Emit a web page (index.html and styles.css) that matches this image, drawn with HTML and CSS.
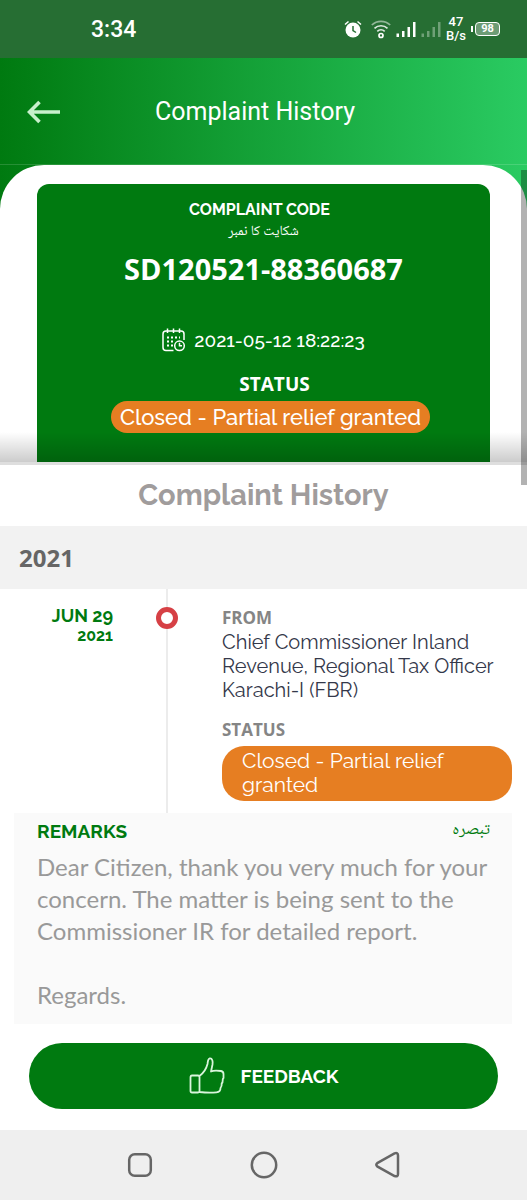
FILE: index.html
```html
<!DOCTYPE html>
<html lang="en">
<head>
<meta charset="utf-8">
<meta name="viewport" content="width=device-width, initial-scale=1">
<title>Complaint History</title>
<link rel="stylesheet" href="styles.css">
</head>
<body>
<div class="screen">
  <div class="status-bar">
    <time class="clock">3:34</time>
    <div class="indicators">
      <svg class="alarm" width="18" height="18" viewBox="0 0 18 18" fill="none" stroke="#fff" stroke-width="2">
        <circle cx="9" cy="10" r="7.500" fill="#fff" stroke="none"/>
        <path d="M1 4.500 4.500 1.500M17 4.500 13.500 1.500" stroke-width="1.500"/>
        <path d="M9 6v4.500l3 2" stroke="#266e33" stroke-width="1.500"/>
      </svg>
      <svg class="wifi" width="20" height="19" viewBox="0 0 20 19" fill="none" stroke="#fff" stroke-width="1.700">
        <path d="M.8 5a13.500 13.500 0 0 1 18.400 0" opacity=".5"/>
        <path d="M3.500 8.300a9.500 9.500 0 0 1 13 0M6.300 11.300a5.500 5.500 0 0 1 7.400 0" opacity=".85"/>
        <circle cx="10" cy="15.500" r="2"/>
      </svg>
      <svg width="20" height="17" viewBox="0 0 20 17" fill="#fff">
        <path d="M.5 12.500h2.500V16H.5zM6 10h2.500v6H6zM11.500 6H14v10h-2.500zM17 1h2.500v15H17z"/>
      </svg>
      <svg width="20" height="17" viewBox="0 0 20 17" fill="#6fa077">
        <path d="M.5 12.500h2.500V16H.5zM6 10h2.500v6H6zM11.500 6H14v10h-2.500zM17 1h2.500v15H17z"/>
      </svg>
      <div class="speed"><span>47</span><span>B/s</span></div>
      <div class="battery"><span class="battery-tip"></span><span class="battery-level">98</span></div>
    </div>
  </div>

  <header class="app-bar">
    <button class="back" type="button" aria-label="Back">
      <svg width="34" height="24" viewBox="0 0 34 24" fill="none" stroke="#c8f0cc" stroke-width="3.600">
        <path d="M33 12H3M12.500 2 2.500 12l10 10"/>
      </svg>
    </button>
    <h1 class="app-title">Complaint History</h1>
  </header>

  <main class="sheet">
    <section class="summary">
      <div class="card">
        <h2 class="card-label">COMPLAINT CODE</h2>
        <p class="card-urdu" lang="ur" dir="rtl">شکایت کا نمبر</p>
        <p class="code">SD120521-88360687</p>
        <p class="stamp">
          <svg width="24" height="24" viewBox="0 0 24 24" fill="none" stroke="#fff" stroke-width="1.500">
            <path d="M11.500 22.500H4a3 3 0 0 1-3-3V6a3 3 0 0 1 3-3h15a3 3 0 0 1 3 3v6M5.500.5v4.500M11.500.5v4.500M17.500.5v4.500"/>
            <path d="M5 9.500h13M5 13.500h8M5 17.500h6" stroke-width="2" stroke-dasharray="2 2"/>
            <circle cx="17.500" cy="17.800" r="4.800"/>
            <path d="M17.500 14.800v3h2.500"/>
          </svg>
          <time>2021-05-12 18:22:23</time>
        </p>
        <h2 class="card-status">STATUS</h2>
        <p class="pill">Closed - Partial relief granted</p>
      </div>
    </section>

    <h2 class="history-title">Complaint History</h2>
    <h3 class="year">2021</h3>

    <article class="entry">
      <div class="entry-date"><span class="day">JUN 29</span><span class="entry-year">2021</span></div>
      <div class="rail"><span class="dot"></span></div>
      <div class="entry-body">
        <h4 class="label">FROM</h4>
        <p class="sender">Chief Commissioner Inland<br>Revenue, Regional Tax Officer<br>Karachi-I (FBR)</p>
        <h4 class="label">STATUS</h4>
        <p class="badge">Closed - Partial relief<br>granted</p>
      </div>
    </article>

    <section class="remarks">
      <div class="remarks-head">
        <h4>REMARKS</h4>
        <span class="remarks-urdu" lang="ur" dir="rtl">تبصرہ</span>
      </div>
      <p class="remarks-text">Dear Citizen, thank you very much for your<br>concern. The matter is being sent to the<br>Commissioner IR for detailed report.<br><br>Regards.</p>
    </section>

    <button class="feedback" type="button">
      <svg width="36" height="38" viewBox="0 0 36 38" fill="none" stroke="#d9f5dc" stroke-width="1.800" stroke-linejoin="round" stroke-linecap="round">
        <path d="M3 18.500h6q1.500 0 1.500 1.500v14q0 1.500-1.500 1.500H3Q1.500 35.500 1.500 34V20.500Q1.500 18.500 3 18.500zM10.500 19c4-3 7-8 8-12 .4-2 .2-5 2-5.500 3-.5 3.500 3 3 6l-1.500 7c3-1.500 7-1 10-.5q2.500.6 2.500 3v4q-1 1-.8 2.500.1 2-1 3 .2 3-1.200 4.500 0 4-4 4.300-8 .6-17-.3"/>
      </svg>
      <span>FEEDBACK</span>
    </button>
    <div class="scroll-thumb"></div>
  </main>

  <nav class="nav-bar" aria-label="System navigation">
    <button type="button" aria-label="Recent apps"><svg width="28" height="28" viewBox="0 0 28 28"><rect x="3.200" y="3.200" width="21.600" height="21.600" rx="5.500"/></svg></button>
    <button type="button" aria-label="Home"><svg width="28" height="28" viewBox="0 0 28 28"><circle cx="14" cy="14" r="12.200"/></svg></button>
    <button type="button" aria-label="Back"><svg width="28" height="28" viewBox="0 0 28 28"><path d="M3.200 12.200 20.500 2.400Q24 1.200 24 4.500v18.500q0 3.200-3.500 2L3.200 15.400q-1.800-1.600 0-3.200z"/></svg></button>
  </nav>
</div>
</body>
</html>
```
FILE: styles.css
```css
* { box-sizing: border-box; }
body, h1, h2, h3, h4, p { margin: 0; }
button { border: 0; padding: 0; background: none; font: inherit; color: inherit; cursor: pointer; }
svg { display: block; flex: none; }

body { background: #fff; font-family: "Raleway", "Lato", sans-serif; }

.screen {
  display: flex;
  flex-direction: column;
  min-height: 100vh;
  background: linear-gradient(90deg, #007a10, #2acb62);
}

/* Device status bar */
.status-bar {
  display: flex;
  align-items: center;
  justify-content: space-between;
  height: 58px;
  padding: 0 27px 0 91px;
  background: #266e33;
  color: #fff;
  font-family: Roboto, sans-serif;
  font-weight: 500;
}
.clock { font-size: 23px; }
.indicators { display: flex; align-items: center; gap: 5px; }
.wifi { margin: 0 0 0 4px; }
.speed { display: flex; flex-direction: column; align-items: center; font-size: 13px; line-height: 14px; }
.battery { display: flex; align-items: center; gap: 2px; }
.battery-tip { width: 2px; height: 6px; background: #fff; }
.battery-level {
  width: 25px;
  height: 14px;
  border: 1px solid #fff;
  border-radius: 4px;
  background: #6d9c75;
  font-size: 11px;
  font-weight: 700;
  line-height: 12px;
  text-align: center;
}

/* App bar */
.app-bar {
  display: grid;
  grid-template-columns: 34px 1fr 34px;
  align-items: center;
  height: 107px;
  padding: 2px 28px 0 27px;
  border-bottom: 1px solid rgba(255, 255, 255, 0.15);
  color: #fff;
}
.app-title {
  font-family: Roboto, sans-serif;
  font-size: 25px;
  font-weight: 400;
  line-height: 32px;
  text-align: center;
  margin-left: -16px;
}

/* Content sheet */
.sheet {
  position: relative;
  display: flex;
  flex: 1;
  flex-direction: column;
  border-radius: 44px 44px 0 0;
  background: #fff;
}
.summary {
  position: relative;
  padding: 19px 37px 0;
  border-bottom: 3px solid #dedede;
}
.summary::after {
  content: "";
  position: absolute;
  inset: auto 0 0;
  height: 30px;
  background: linear-gradient(rgba(0, 0, 0, 0), rgba(0, 0, 0, 0.2));
}
.card {
  display: flex;
  flex-direction: column;
  align-items: center;
  padding: 17px 0 29px;
  border-radius: 12px 12px 0 0;
  background: #007a10;
  color: #fff;
}
.card-label { padding-right: 8px; font-size: 16px; font-weight: 700; line-height: 18px; }
.card-urdu { font-family: "Noto Naskh Arabic", "DejaVu Sans", sans-serif; font-size: 14px; line-height: 26px; }
.code {
  margin-top: 4px;
  font-family: "Open Sans", "Noto Sans", sans-serif;
  font-size: 29px;
  font-weight: 700;
  line-height: 40px;
}
.stamp {
  display: flex;
  align-items: center;
  gap: 8px;
  margin-top: 37px;
  font-size: 19px;
  font-weight: 500;
  line-height: 28px;
}
.card-status { margin: 18px 0 5px; padding-left: 22px; font-family: "Open Sans", sans-serif; font-size: 19px; font-weight: 700; line-height: 24px; }
.pill {
  margin-left: 14px;
  padding: 0 9px;
  border-radius: 16px;
  background: #e67e22;
  font-size: 22px;
  font-weight: 500;
  line-height: 32px;
}

.history-title {
  padding: 12px 0 13px;
  color: #a09c9c;
  font-size: 29px;
  font-weight: 700;
  line-height: 36px;
  text-align: center;
}
.year {
  padding: 16px 19px 15px;
  background: #f2f2f2;
  color: #666;
  font-family: "Open Sans", sans-serif;
  font-size: 24px;
  font-weight: 700;
  line-height: 32px;
}

/* Timeline entry */
.entry { display: grid; grid-template-columns: 113px 108px 1fr; }
.entry-date {
  display: flex;
  flex-direction: column;
  align-items: flex-end;
  padding-top: 16px;
  color: #007a10;
  font-size: 18px;
  font-weight: 700;
  line-height: 22px;
}
.entry-year { font-size: 16px; line-height: 18px; }
.rail {
  display: flex;
  justify-content: center;
  padding-top: 18px;
  background: linear-gradient(#ececec, #ececec) center / 2px 100% no-repeat;
}
.dot { width: 22px; height: 22px; border: 5px solid #d64045; border-radius: 50%; background: #fff; }
.entry-body { padding: 17px 15px 12px 1px; }
.label { color: #858585; font-family: "Open Sans", sans-serif; font-size: 17px; font-weight: 700; line-height: 24px; }
.sender { margin-bottom: 16px; color: #34384a; font-size: 20px; line-height: 24px; }
.badge {
  margin-top: 4px;
  padding: 3px 20px 4px;
  border-radius: 22px;
  background: #e67e22;
  color: #fff;
  font-size: 21px;
  line-height: 24px;
}

/* Remarks */
.remarks { margin: 0 15px 0 14px; padding: 6px 0 13px 23px; background: #fafafa; }
.remarks-head { display: flex; justify-content: space-between; padding-right: 22px; color: #007a10; line-height: 24px; }
.remarks-head h4 { font-size: 19px; font-weight: 700; }
.remarks-urdu { font-family: "Noto Naskh Arabic", "DejaVu Sans", sans-serif; font-size: 17px; }
.remarks-text { margin-top: 8px; color: #999; font-family: Lato, sans-serif; font-size: 24px; font-weight: 400; line-height: 32px; }

.feedback {
  display: flex;
  align-items: center;
  justify-content: center;
  gap: 16px;
  height: 66px;
  margin: 19px 29px 21px;
  border-radius: 33px;
  background: #007a10;
  color: #fff;
  font-size: 19px;
  font-weight: 700;
}

.scroll-thumb {
  position: absolute;
  top: 5px;
  right: 0;
  width: 6px;
  height: 315px;
  background: rgba(0, 0, 0, 0.3);
}

/* Device navigation */
.nav-bar {
  display: flex;
  align-items: center;
  justify-content: center;
  gap: 96px;
  height: 70px;
  background: #efefef;
}
.nav-bar svg { fill: none; stroke: #666; stroke-width: 2.5; }
```
